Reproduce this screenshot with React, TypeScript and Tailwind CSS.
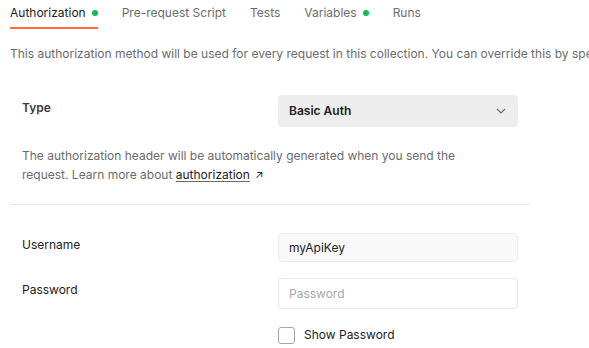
import React from "react";

export default function App() {
  const tabs = [
    { label: "Authorization", dot: true, active: true },
    { label: "Pre-request Script" },
    { label: "Tests" },
    { label: "Variables", dot: true },
    { label: "Runs" },
  ];
  return (
    <div
      className="w-[589px] h-[348px] overflow-hidden bg-white text-[#212121]"
      style={{ fontFamily: "Inter, 'Noto Sans', sans-serif" }}
    >
      <div className="flex gap-6 pl-[10px] h-[29px]">
        {tabs.map((t) => (
          <div
            key={t.label}
            className={
              "flex items-start pt-[4px] h-full gap-[6px] text-[12px] leading-[18px] " +
              (t.active ? "text-[#212121] border-b-2 border-[#ff6c37]" : "text-[#6b6b6b]")
            }
          >
            <span>{t.label}</span>
            {t.dot && <span className="mt-[6px] w-[6px] h-[6px] rounded-full bg-[#0cbb52]" />}
          </div>
        ))}
      </div>
      <div className="pl-[10px] pt-[16px] text-[12px] leading-[18px] text-[#6b6b6b] whitespace-nowrap overflow-hidden">
        This authorization method will be used for every request in this collection. You can override this by spe
      </div>
      <div className="pl-[10px] w-[530px]">
        <div className="pl-[12px] pt-[32px]">
          <div className="flex">
            <div className="w-[256px] pt-[4px] text-[12px] font-semibold leading-[18px] text-[#3a3a3a]">Type</div>
            <div className="w-[240px] h-[32px] rounded-[4px] bg-[#ededed] flex items-center justify-between pl-[11px] pr-[12px]">
              <span className="text-[12px] font-semibold text-[#212121]">Basic Auth</span>
              <svg width="10" height="6" viewBox="0 0 10 6" fill="none">
                <path d="M1 1l4 4 4-4" stroke="#6b6b6b" strokeWidth="1.1" />
              </svg>
            </div>
          </div>
          <div className="pt-[19px] text-[12px] leading-[19px] text-[#6b6b6b] w-[460px]">
            The authorization header will be automatically generated when you send the request. Learn more about{" "}
            <span className="text-[#212121] underline underline-offset-2 decoration-[#6b6b6b]">authorization</span>
            <span className="ml-[5px] text-[11px] text-[#212121]">↗</span>
          </div>
        </div>
        <div className="mt-[19px] h-px bg-[#e6e6e6]" />
        <div className="pl-[12px] pt-[28px]">
          <div className="flex">
            <div className="w-[256px] pt-[3px] text-[12px] leading-[18px] text-[#212121]">Username</div>
            <div className="w-[240px] h-[29px] rounded-[4px] bg-[#f9f9f9] border border-[#ededed] flex items-center pl-[10px] text-[12px] text-[#212121]">
              myApiKey
            </div>
          </div>
          <div className="flex mt-[16px]">
            <div className="w-[256px] pt-[3px] text-[12px] leading-[18px] text-[#212121]">Password</div>
            <div className="w-[240px] h-[31px] rounded-[4px] bg-white border border-[#e6e6e6] flex items-center pl-[10px] text-[12px] text-[#a6a6a6]">
              Password
            </div>
          </div>
          <div className="flex mt-[17px] ml-[256px] items-center gap-[9px]">
            <div className="w-[17px] h-[17px] rounded-[3px] border border-[#a6a6a6] bg-white" />
            <span className="text-[12px] text-[#212121]">Show Password</span>
          </div>
        </div>
      </div>
    </div>
  );
}
